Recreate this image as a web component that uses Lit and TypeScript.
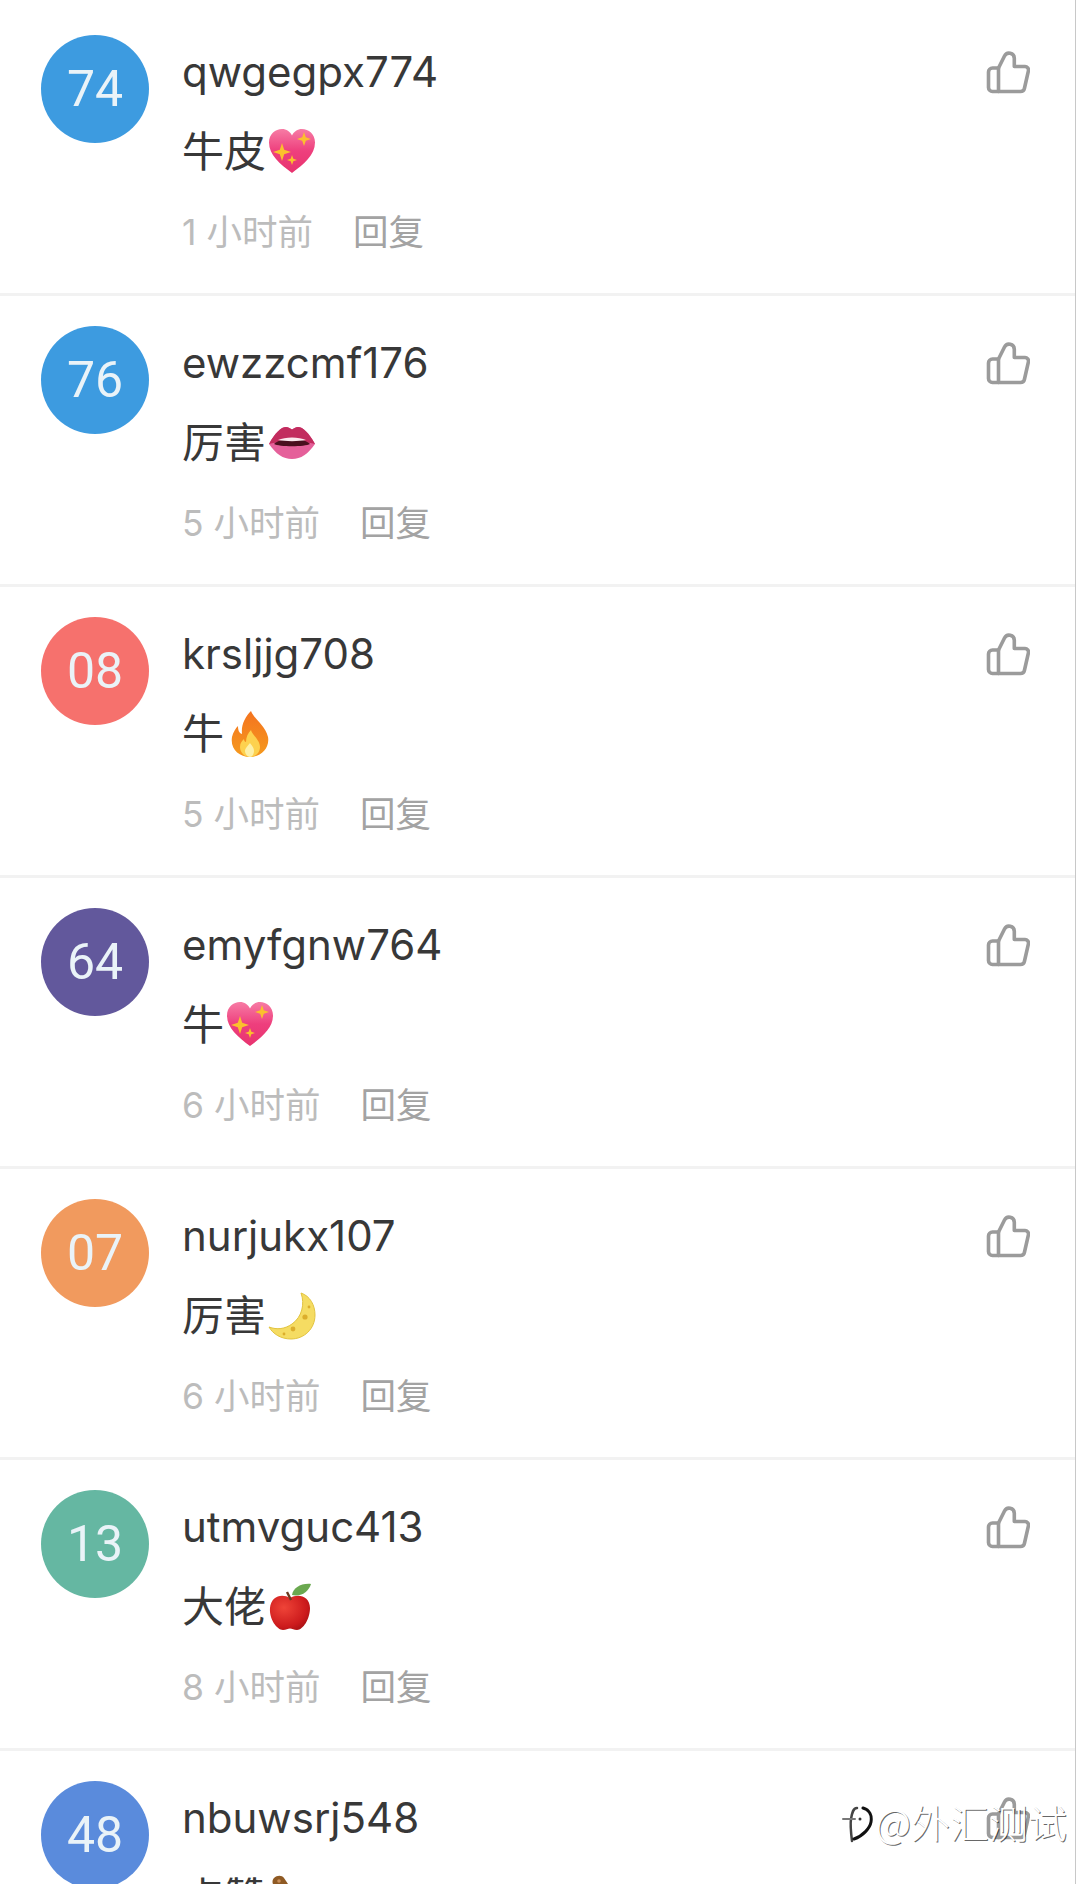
import { LitElement, html, css, svg } from "lit";
import { customElement } from "lit/decorators.js";

const sparkleHeart = svg`<svg class="emoji" viewBox="0 0 48 48"><defs><linearGradient id="hg" x1="0" y1="0" x2="0" y2="1"><stop offset="0" stop-color="#f77ca5"/><stop offset="0.5" stop-color="#ee3f7d"/><stop offset="1" stop-color="#e8336f"/></linearGradient></defs><path d="M24 45C12 36 1 27 1 14.500 1 6 7.500 1 14 1c4.500 0 8 2.500 10 6.500C26 3.500 29.500 1 34 1c6.500 0 13 5 13 13.500C47 27 36 36 24 45z" fill="url(#hg)"/><path fill="#fbc02d" d="M36 4l1.800 5.200L43 11l-5.200 1.800L36 18l-1.800-5.200L29 11l5.200-1.800zM14 15l2.200 6.800L23 24l-6.800 2.200L14 33l-2.200-6.800L5 24l6.800-2.200zM24 27l1.300 3.700L29 32l-3.700 1.300L24 37l-1.300-3.700L19 32l3.700-1.300z"/></svg>`;

const lips = svg`<svg class="emoji" viewBox="0 0 48 48"><path d="M1 25C7 14 13 8 18 8c2.500 0 4.500 1.500 6 2.500C25.500 9.500 27.500 8 30 8c5 0 11 6 17 17-7 10-14 15-23 15S8 35 1 25z" fill="#e5609a"/><path d="M1 25C7 14 13 8 18 8c2.500 0 4.500 1.500 6 2.500C25.500 9.500 27.500 8 30 8c5 0 11 6 17 17-10-3-36-3-46 0z" fill="#c22c5e"/><path d="M6 25c7-7 29-7 36 0-5 3-31 3-36 0z" fill="#4a0f1e"/><path d="M10 21c7-3.500 21-3.500 28 0-7 1.500-21 1.500-28 0z" fill="#fbe9ee"/></svg>`;

const fire = svg`<svg class="emoji" viewBox="0 0 48 48"><defs><linearGradient id="fg" x1="0" y1="0" x2="0" y2="1"><stop offset="0" stop-color="#f4731f"/><stop offset="1" stop-color="#f59a1e"/></linearGradient></defs><path d="M25 1c3 8 14 14 17 26 2 11-7 20-18 20S4 39 6 27c1-5 4-9 6-11 0 4 1 7 4 8C15 15 19 7 25 1z" fill="url(#fg)"/><path d="M25 20c1 5 9 10 9 17 0 6-5 10-10 10s-10-4-10-10c0-4 2-6 4-8 0 2 1 3 2 3 0-5 2-9 5-12z" fill="#fdd14e"/><path d="M24 33c1 2 4 4 4 8 0 3-2 6-4 6s-5-3-5-6c0-3 3-5 5-8z" fill="#fdf0a8"/></svg>`;

const moon = svg`<svg class="emoji" viewBox="0 0 48 48"><path d="M33 1c9 3 14 12 14 22 0 14-11 24-24 24C13 47 5 42 1 35c8 3 16 2 23-3C34 25 37 12 33 1z" fill="#f5dc62" stroke="#e2c33f" stroke-width="1"/><circle cx="37" cy="25" r="2.600" fill="#dcae2c"/><circle cx="25" cy="37" r="2.400" fill="#dcae2c"/><circle cx="41" cy="15" r="1.400" fill="#dcae2c"/><circle cx="16" cy="42" r="1.400" fill="#dcae2c"/></svg>`;

const apple = svg`<svg class="emoji" viewBox="0 0 48 48"><defs><radialGradient id="ag" cx="0.35" cy="0.35" r="0.8"><stop offset="0" stop-color="#ef4438"/><stop offset="0.7" stop-color="#cc1a1c"/><stop offset="1" stop-color="#9e0f12"/></radialGradient></defs><path d="M22 15C14 10 3 13 2 25c-1 11 7 22 13 22 3 0 5-1.500 7-1.500S26 47 29 47c6 0 13-11 13-22 0-12-12-15-20-10z" fill="url(#ag)"/><path d="M19 9l4 8" stroke="#6b3a1f" stroke-width="2.400" fill="none"/><path d="M24 12C25 5 33 0 43 1c-2 7-9 13-19 11z" fill="#6aa84f"/></svg>`;

const shovel = svg`<svg class="emoji" viewBox="0 0 48 48"><path d="M6 4c3-3 8-3 10 0l16 24-9 8L6 12C4 9 4 6 6 4z" fill="#8f5a24"/><circle cx="11" cy="7" r="1.800" fill="#c98f5a"/></svg>`;

const thumb = svg`<svg class="thumb" viewBox="0 0 44 44" fill="none" stroke="#9b9b9b" stroke-width="3.600" stroke-linejoin="round" stroke-linecap="round"><path d="M12.500 18H6.500a4 4 0 0 0-4 4v15.500a4 4 0 0 0 4 4h6z"/><path d="M12.500 18L18.500 6a5.200 5.200 0 0 1 9.800 2.200V16.500h10.700a3.500 3.500 0 0 1 3.400 4.300l-4 17.700a4 4 0 0 1-3.900 3H12.500"/></svg>`;

const rows = [
  { n: "74", c: "#3d9be0", name: "qwgegpx774", text: "牛皮", e: sparkleHeart, time: "1 小时前" },
  { n: "76", c: "#3d9be0", name: "ewzzcmf176", text: "厉害", e: lips, time: "5 小时前" },
  { n: "08", c: "#f6716d", name: "krsljjg708", text: "牛", e: fire, time: "5 小时前" },
  { n: "64", c: "#62589c", name: "emyfgnw764", text: "牛", e: sparkleHeart, time: "6 小时前" },
  { n: "07", c: "#f19a5e", name: "nurjukx107", text: "厉害", e: moon, time: "6 小时前" },
  { n: "13", c: "#65b7a2", name: "utmvguc413", text: "大佬", e: apple, time: "8 小时前" },
  { n: "48", c: "#5a8bdc", name: "nbuwsrj548", text: "点赞", e: shovel, time: "8 小时前" },
];

@customElement("app-root")
export class AppRoot extends LitElement {
  static styles = css`
    :host {
      display: block;
      position: relative;
      width: 1076px;
      height: 1884px;
      overflow: hidden;
      background: #fff;
      font-family: "Inter", "Noto Sans CJK SC", sans-serif;
    }
    .list {
      border-right: 1px solid #c8c8c8;
      box-sizing: border-box;
      width: 1076px;
      height: 1884px;
      padding-top: 5px;
    }
    .row {
      display: flex;
      box-sizing: border-box;
      height: 291px;
      padding: 30px 44px 0 41px;
      border-bottom: 3px solid #f2f2f2;
    }
    .avatar {
      flex: none;
      width: 108px;
      height: 108px;
      border-radius: 50%;
      display: flex;
      align-items: center;
      justify-content: center;
      color: #eaf3f8;
      font-size: 50px;
      font-family: "Roboto", sans-serif;
    }
    .body {
      flex: 1;
      padding: 12px 0 0 33px;
    }
    .name {
      font-size: 42px;
      line-height: 50px;
      color: #383838;
    }
    .text {
      display: flex;
      align-items: center;
      margin-top: 28px;
      font-family: "Noto Sans CJK SC", sans-serif;
      font-size: 42px;
      line-height: 48px;
      color: #383838;
    }
    .emoji {
      width: 48px;
      height: 48px;
      margin: 3px 0 -3px 2px;
    }
    .meta {
      display: flex;
      gap: 40px;
      margin-top: 38px;
      font-family: "Inter", "Noto Sans CJK SC", sans-serif;
      font-size: 35.500px;
      line-height: 44px;
      color: #bcbcbc;
    }
    .reply {
      color: #a3a3a3;
    }
    .thumb {
      flex: none;
      width: 44px;
      height: 44px;
      margin-top: 15px;
      margin-right: 1px;
    }
    .mark {
      position: absolute;
      right: 9px;
      top: 1796px;
      display: flex;
      align-items: center;
      gap: 3px;
      font-family: "Noto Sans CJK SC", sans-serif;
      font-weight: 300;
      font-size: 39px;
      line-height: 50px;
      color: #fff;
      text-shadow: 1px 1px 0 rgba(0, 0, 0, 0.6);
    }
    .mark svg {
      width: 32px;
      height: 40px;
      margin-top: 8px;
    }
  `;

  render() {
    return html`
      <div class="list">
        ${rows.map(
          (r) => html`
            <div class="row">
              <div class="avatar" style="background:${r.c}">${r.n}</div>
              <div class="body">
                <div class="name">${r.name}</div>
                <div class="text">${r.text}${r.e}</div>
                <div class="meta"><span>${r.time}</span><span class="reply">回复</span></div>
              </div>
              ${thumb}
            </div>
          `
        )}
      </div>
      <div class="mark">
        <svg viewBox="0 0 32 40" fill="none" stroke-linecap="round"><path d="M16 3C12 3 11 8 10 14S10 28 11 36" stroke="#444" stroke-width="2.500"/><path d="M2 14h12" stroke="#777" stroke-width="2"/><circle cx="19" cy="14" r="1.500" fill="#333"/><path d="M22 3c7 2 9 8 8 14s-8 14-17 17" stroke="#111" stroke-width="3"/></svg>
        <span>@外汇测试</span>
      </div>
    `;
  }
}
